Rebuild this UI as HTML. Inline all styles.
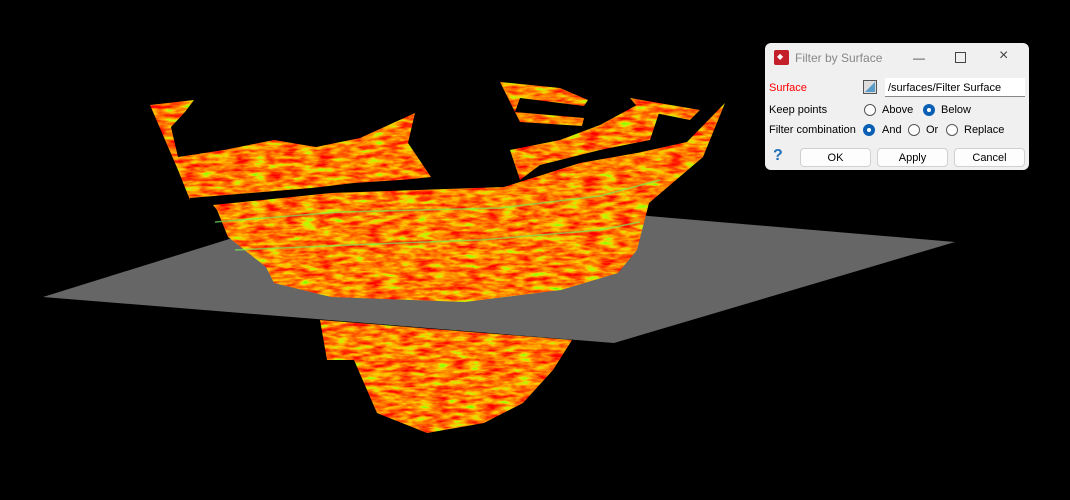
<!DOCTYPE html>
<html><head><meta charset="utf-8"><style>
body{margin:0;width:1070px;height:500px;background:#000;overflow:hidden;position:relative;font-family:"Liberation Sans",sans-serif;}
svg.scene{position:absolute;left:0;top:0}
.dlg{position:absolute;left:765px;top:43px;width:264px;height:127px;background:#f0f0f0;border-radius:6px;font-size:11px;color:#000}
.t{position:absolute;white-space:nowrap}
.rad{position:absolute;width:12px;height:12px;border:1px solid #555;border-radius:50%;background:#fff;box-sizing:border-box}
.rad.on{border:none;background:#0a5fb4}
.rad.on::after{content:"";position:absolute;left:4px;top:4px;width:4px;height:4px;border-radius:50%;background:#fff}
.btn{position:absolute;top:105px;height:19px;width:71px;background:#fdfdfd;border:1px solid #d0d0d0;border-radius:4px;box-sizing:border-box;text-align:center;line-height:18px}
</style></head><body>
<svg class="scene" width="1070" height="500">
<defs>
<filter id="tex" x="0" y="0" width="100%" height="100%" color-interpolation-filters="sRGB">
<feTurbulence type="fractalNoise" baseFrequency="0.06 0.22" numOctaves="3" seed="4"/>
<feColorMatrix type="matrix" values="-2.4 0 0 0 2.6  1.7 0 0 0 -0.35  0 0 0 0 0  0 0 0 0 1"/>
</filter>
<clipPath id="up">
<polygon points="150,105 194,100 185,112 171,127 178,157 224,150 274,140 316,147 360,138 415,113 408,143 431,177 354,185 312,190 190,200 178,170"/>
<polygon points="213,205 331,193 504,187 580,163 637,153 687,142 725,103 703,157 676,180 649,203 637,250 618,273 561,290 465,302 331,297 274,283 266,267 228,237 217,210"/>
<polygon points="500,82 560,88 588,100 584,106 520,98 515,112 584,118 582,126 520,122"/>
<polygon points="510,150 560,140 600,125 637,105 660,110 650,140 600,150 540,165 520,180"/>
<polygon points="630,98 700,110 690,120 640,110"/>
</clipPath>
<clipPath id="lo">
<polygon points="320,320 572,340 553,370 523,403 484,423 427,433 377,413 354,360 327,360"/>
</clipPath>
</defs>
<g clip-path="url(#lo)"><rect x="300" y="300" width="300" height="150" filter="url(#tex)"/></g>
<polygon points="43,297 377,193 955,242 614,343" fill="#666"/>
<g clip-path="url(#up)"><rect x="140" y="75" width="600" height="235" filter="url(#tex)"/></g>
<polyline points="190,200 312,190 354,185 431,180" fill="none" stroke="#000" stroke-width="4"/>
<polyline points="215,222 340,212 500,208 600,196 660,180" fill="none" stroke="#7e5" stroke-width="1.5" opacity=".7"/>
<polyline points="235,250 350,245 480,240 600,230 640,222" fill="none" stroke="#7e5" stroke-width="1.5" opacity=".7"/>
</svg>
<div class="dlg">
<div style="position:absolute;left:9px;top:7px;width:15px;height:15px;background:#c4202a;border-radius:2px"><span style="position:absolute;left:3px;top:3px;color:#fff;font-size:8px;line-height:8px">◆</span></div>
<div class="t" style="left:30px;top:8px;font-size:12px;color:#888">Filter by Surface</div>
<div class="t" style="left:148px;top:8px;color:#444;font-size:12px">—</div>
<div style="position:absolute;left:190px;top:9px;width:9px;height:9px;border:1px solid #444"></div>
<div class="t" style="left:234px;top:4px;color:#444;font-size:16px">×</div>
<div class="t" style="left:4px;top:39px;color:#f00">Surface</div>
<div style="position:absolute;left:98px;top:37px;width:14px;height:14px;border:1px solid #555;background:#ddd;box-sizing:border-box"><svg width="12" height="12"><polygon points="1,11 11,11 11,1" fill="#5a9cc8"/></svg></div>
<div style="position:absolute;left:120px;top:35px;width:140px;height:19px;background:#fff;border-bottom:1px solid #888;box-sizing:border-box"></div>
<div class="t" style="left:123px;top:39px">/surfaces/Filter Surface</div>
<div class="t" style="left:4px;top:61px">Keep points</div>
<div class="rad" style="left:99px;top:61px"></div><div class="t" style="left:117px;top:61px">Above</div>
<div class="rad on" style="left:158px;top:61px"></div><div class="t" style="left:176px;top:61px">Below</div>
<div class="t" style="left:4px;top:81px">Filter combination</div>
<div class="rad on" style="left:98px;top:81px"></div><div class="t" style="left:117px;top:81px">And</div>
<div class="rad" style="left:143px;top:81px"></div><div class="t" style="left:161px;top:81px">Or</div>
<div class="rad" style="left:181px;top:81px"></div><div class="t" style="left:199px;top:81px">Replace</div>
<div class="t" style="left:8px;top:104px;color:#1f70b8;font-weight:bold;font-size:16px">?</div>
<div class="btn" style="left:35px">OK</div>
<div class="btn" style="left:112px">Apply</div>
<div class="btn" style="left:189px">Cancel</div>
</div>
</body></html>
